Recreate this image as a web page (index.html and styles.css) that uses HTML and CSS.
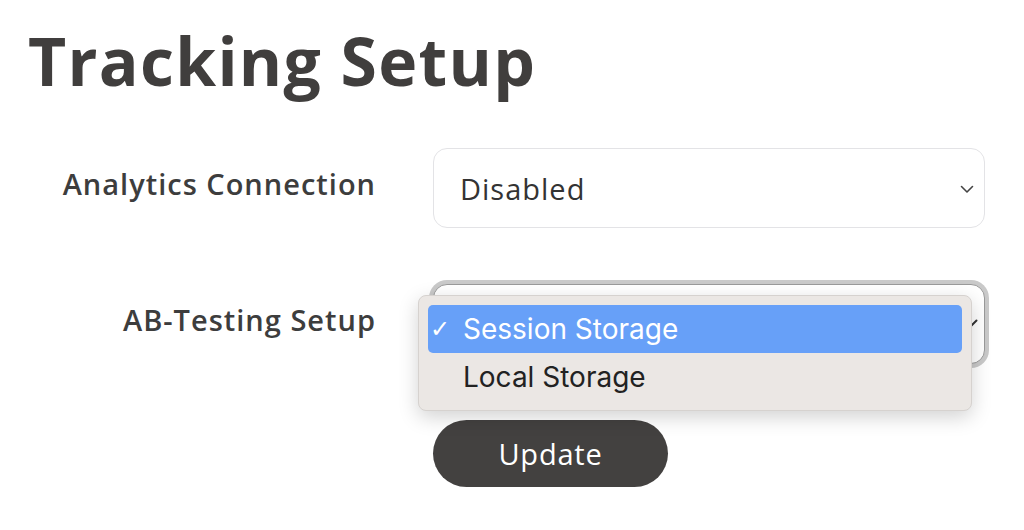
FILE: index.html
```html
<!DOCTYPE html>
<html lang="en">
<head>
<meta charset="utf-8">
<title>Tracking Setup</title>
<link rel="stylesheet" href="styles.css">
</head>
<body>
<main class="page">
  <h1 class="title">Tracking Setup</h1>
  <div class="form">
    <div class="label">Analytics Connection</div>
    <div class="select">
      <span class="value">Disabled</span>
      <svg class="chev" width="14" height="9" viewBox="0 0 14 9"><path d="M1.5 1.5 L7 7 L12.5 1.5" fill="none" stroke="#444" stroke-width="1.6" stroke-linecap="round" stroke-linejoin="round"/></svg>
    </div>

    <div class="label">AB-Testing Setup</div>
    <div class="select select-open">
      <svg class="chev chev-dark" width="16" height="10" viewBox="0 0 16 10"><path d="M1.5 1.5 L8 8 L14.5 1.5" fill="none" stroke="#333" stroke-width="2" stroke-linecap="round" stroke-linejoin="round"/></svg>
      <ul class="menu">
        <li class="opt opt-active"><span class="check">✓</span>Session Storage</li>
        <li class="opt">Local Storage</li>
      </ul>
    </div>

    <div></div>
    <div class="actions"><button class="btn">Update</button></div>
  </div>
</main>
</body>
</html>
```

FILE: styles.css
```css
html, body {
  margin: 0;
  padding: 0;
  background: #ffffff;
}
.page {
  padding: 20px 0 0 28px;
  font-family: "Open Sans", "DejaVu Sans", sans-serif;
  color: #3e3c3b;
}
.title {
  margin: 0;
  font-size: 66px;
  line-height: 80px;
  font-weight: 700;
  color: #403e3d;
  letter-spacing: 1.3px;
}
.form {
  margin-top: 48px;
  display: grid;
  grid-template-columns: 348px 552px;
  column-gap: 57px;
  row-gap: 56px;
  align-items: center;
}
.label {
  text-align: right;
  font-size: 29px;
  font-weight: 600;
  letter-spacing: 1px;
  color: #3d3d3d;
  padding-bottom: 10px;
}
.select {
  position: relative;
  height: 80px;
  box-sizing: border-box;
  border: 1.5px solid #e3e3e6;
  border-radius: 14px;
  background: #fff;
  display: flex;
  align-items: center;
  padding: 0 26px;
}
.value {
  flex: 1;
  font-size: 29px;
  letter-spacing: 1px;
  color: #333;
}
.chev {
  position: absolute;
  right: 10px;
  top: 36px;
}
.select-open {
  border: 1.5px solid #9a9a9a;
  box-shadow: 0 0 0 4px #c9c9c9;
}
.chev-dark {
  right: 6px;
  top: 34px;
}
.menu {
  position: absolute;
  left: -16px;
  top: 10px;
  width: 554px;
  height: 116px;
  box-sizing: border-box;
  margin: 0;
  padding: 9px 9px;
  list-style: none;
  background: #ebe7e4;
  border-radius: 8px;
  border: 1px solid #d6d2cf;
  box-shadow: 0 6px 20px rgba(0,0,0,0.18);
  font-family: "Inter", "Liberation Sans", sans-serif;
}
.opt {
  height: 48px;
  display: flex;
  align-items: center;
  padding-left: 35px;
  position: relative;
  font-size: 28px;
  color: #222;
  border-radius: 5px;
}
.opt-active {
  background: #67a0f8;
  color: #fff;
}
.check {
  position: absolute;
  left: 2px;
  top: 10px;
  font-family: "DejaVu Sans", sans-serif;
  font-size: 24px;
  font-weight: 700;
}
.actions {
  display: flex;
}
.btn {
  width: 235px;
  height: 67px;
  border: none;
  border-radius: 34px;
  background: #434140;
  color: #fff;
  font-family: "Open Sans", "DejaVu Sans", sans-serif;
  font-size: 29px;
  letter-spacing: 0.8px;
  font-weight: 500;
  padding: 0;
}
```
